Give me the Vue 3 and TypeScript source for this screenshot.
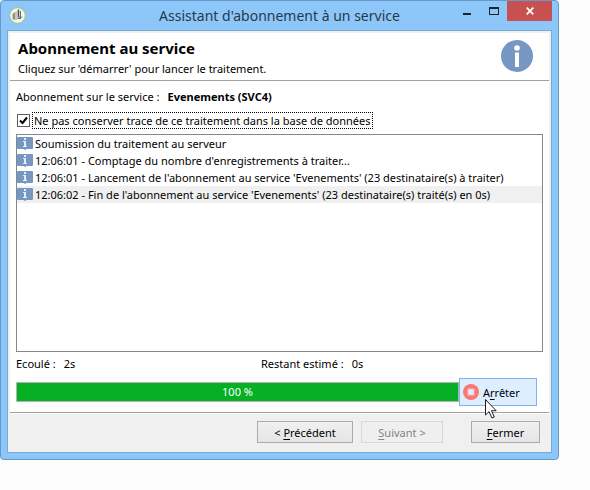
<script setup lang="ts">
import { ref } from 'vue'

interface LogEntry {
  id: number
  text: string
}

const skipTrace = ref(true)
const progress = ref(100)
const selectedId = ref(4)

const entries: LogEntry[] = [
  { id: 1, text: 'Soumission du traitement au serveur' },
  { id: 2, text: "12:06:01 - Comptage du nombre d'enregistrements à traiter..." },
  { id: 3, text: "12:06:01 - Lancement de l'abonnement au service 'Evenements' (23 destinataire(s) à traiter)" },
  { id: 4, text: "12:06:02 - Fin de l'abonnement au service 'Evenements' (23 destinataire(s) traité(s) en 0s)" },
]
</script>

<template>
  <div class="page">
    <main class="window">
      <header class="titlebar">
        <svg class="app-icon" viewBox="0 0 17 17" aria-hidden="true">
          <circle cx="8.500" cy="8.500" r="7.800" fill="#f6f8f2" stroke="#a3c76b" stroke-width="1" />
          <path d="M3.500 7 6 5v8l-2.500-1z" fill="#8f938c" />
          <path d="M6 5 8.500 3.500v9L6 13.500z" fill="#c4c8c1" />
          <path d="M9.500 2.500v8" stroke="#4b5048" stroke-width="1.500" fill="none" />
          <path d="M11.500 4v7.500H8.500M10 9.500l1.500 2 1.500-2" stroke="#6a6f66" stroke-width="1" fill="none" />
        </svg>
        <h1 class="window-title">Assistant d'abonnement à un service</h1>
        <div class="caption">
          <button type="button" class="cap" aria-label="Réduire"><span class="glyph-min"></span></button>
          <button type="button" class="cap" aria-label="Agrandir"><span class="glyph-max"></span></button>
          <button type="button" class="cap close" aria-label="Fermer la fenêtre">
            <svg viewBox="0 0 8 8" width="8" height="8" aria-hidden="true">
              <path d="M.7.700l6.600 6.600M7.300.700.700 7.300" stroke="#fff" stroke-width="1.800" />
            </svg>
          </button>
        </div>
      </header>

      <div class="client">
        <section class="intro">
          <div>
            <h2>Abonnement au service</h2>
            <p>Cliquez sur 'démarrer' pour lancer le traitement.</p>
          </div>
          <svg class="info" viewBox="0 0 32 32" aria-hidden="true">
            <circle cx="16" cy="16" r="16" fill="#7696c4" />
            <circle cx="16" cy="8" r="2.800" fill="#fff" />
            <rect x="14" y="12.500" width="4" height="14.500" fill="#fff" />
          </svg>
        </section>

        <section class="content">
          <div class="service">
            <span>Abonnement sur le service :</span>
            <strong>Evenements (SVC4)</strong>
          </div>

          <div class="option">
            <input id="skip-trace" v-model="skipTrace" type="checkbox" />
            <label for="skip-trace">Ne pas conserver trace de ce traitement dans la base de données</label>
          </div>

          <ul class="log">
            <li
              v-for="entry in entries"
              :key="entry.id"
              :class="{ selected: entry.id === selectedId }"
              @click="selectedId = entry.id"
            >
              <svg viewBox="0 0 16 13" width="16" height="13" aria-hidden="true">
                <path d="M1 0h14a1 1 0 0 1 1 1v10a1 1 0 0 1-1 1H9.500L8 13 6.500 12H1a1 1 0 0 1-1-1V1a1 1 0 0 1 1-1z" fill="#7696c4" />
                <path d="M7 1h2v2H7zM6 4h3v5h1v1H6V9h1V5H6z" fill="#e6edf7" />
              </svg>
              <span>{{ entry.text }}</span>
            </li>
          </ul>

          <div class="times">
            <div><span>Ecoulé :</span><span class="value">2s</span></div>
            <div><span>Restant estimé :</span><span class="value">0s</span></div>
          </div>

          <div class="run">
            <div class="bar" role="progressbar" :aria-valuenow="progress" aria-valuemin="0" aria-valuemax="100">
              <div class="fill" :style="{ width: progress + '%' }"></div>
              <span class="percent">{{ progress }} %</span>
            </div>
            <button type="button" class="stop">
              <svg viewBox="0 0 16 16" width="16" height="16" aria-hidden="true">
                <circle cx="8" cy="8" r="8" fill="#f97874" />
                <rect x="5" y="5" width="6" height="6" fill="#ddeeff" stroke="#fcb9b7" />
              </svg>
              <span>A<u>r</u>rêter</span>
              <svg class="pointer" viewBox="0 0 12 20" width="12" height="20" aria-hidden="true">
                <path d="M.5.500v15.500l3.600-3.400 2.800 6.400 2.400-1-2.800-6.300h4.700z" fill="#fff" stroke="#1c1c28" />
              </svg>
            </button>
          </div>
        </section>

        <footer class="actions">
          <button type="button" class="btn prev">&lt; <u>P</u>récédent</button>
          <button type="button" class="btn next" disabled><u>S</u>uivant &gt;</button>
          <button type="button" class="btn done"><u>F</u>ermer</button>
        </footer>
      </div>
    </main>
  </div>
</template>

<style>
body {
  background: #fcfcfc;
}
</style>

<style scoped>
.page {
  box-sizing: border-box;
  display: flex;
  min-height: 100vh;
  padding: 0 31px 30px 0;
  font-family: "Noto Sans", "Open Sans", sans-serif;
  font-size: 11px;
  line-height: 17px;
  color: #000;
}

.page * {
  box-sizing: border-box;
}

.window {
  flex: 1;
  min-width: 0;
  display: flex;
  flex-direction: column;
  padding: 0 6px 6px;
  background: #8dc7fa;
  border: 1px solid #6699c8;
  border-radius: 4px;
}

.titlebar {
  display: grid;
  grid-template-columns: 1fr auto 1fr;
  align-items: start;
  height: 29px;
}

.app-icon {
  width: 17px;
  height: 17px;
  margin: 6px 0 0 2px;
}

.window-title {
  margin: 0;
  padding-top: 5px;
  font-size: 14px;
  font-weight: 400;
  line-height: 20px;
  color: #2a3947;
  white-space: nowrap;
}

.caption {
  display: flex;
  justify-content: flex-end;
}

.cap {
  display: flex;
  align-items: flex-start;
  justify-content: center;
  width: 27px;
  height: 20px;
  padding: 0;
  border: 0;
  background: none;
}

.glyph-min {
  width: 8px;
  height: 2px;
  margin-top: 12px;
  background: #1c242c;
}

.glyph-max {
  width: 10px;
  height: 8px;
  margin-top: 6px;
  border: 1px solid #1c242c;
  border-top-width: 2px;
}

.cap.close {
  align-items: center;
  width: 45px;
  background: #c75050;
}

.client {
  flex: 1;
  display: flex;
  flex-direction: column;
  padding: 2px;
  background: #f0f0f0;
  border: 1px solid #78aad8;
}

.intro {
  display: flex;
  justify-content: space-between;
  height: 48px;
  padding: 7px 16px 0 8px;
  background: #fff;
  border-bottom: 1px solid #a0a0a0;
}

.intro h2 {
  margin: 0;
  font-size: 15px;
  font-weight: 700;
  line-height: 16px;
}

.intro p {
  margin: 4px 0 0;
}

.info {
  width: 32px;
  height: 32px;
}

.content {
  flex: 1;
  display: flex;
  flex-direction: column;
  padding: 7px 6px 6px;
  background: #fff;
  border-bottom: 1px solid #a0a0a0;
}

.service {
  display: flex;
  gap: 8px;
}

.option {
  display: flex;
  align-items: center;
  gap: 2px;
  margin: 7px 0 5px;
}

.option input {
  appearance: none;
  width: 13px;
  height: 13px;
  margin: 0 0 0 1px;
  background: #fff;
  border: 1px solid #606060;
}

.option input:checked {
  background: #fff url("data:image/svg+xml,%3Csvg xmlns='http://www.w3.org/2000/svg' viewBox='0 0 11 11'%3E%3Cpath d='M2 5.500 4.500 8 9 2.500' fill='none' stroke='%23000' stroke-width='2'/%3E%3C/svg%3E") center / 11px 11px no-repeat;
}

.option label {
  padding: 0 1px;
  line-height: 15px;
  border: 1px dotted #000;
  white-space: nowrap;
}

.log {
  flex: 1;
  min-height: 120px;
  margin: 0;
  padding: 0;
  list-style: none;
  border: 1px solid #828790;
}

.log li {
  display: flex;
  align-items: center;
  gap: 2px;
  white-space: nowrap;
}

.log li svg {
  flex: none;
}

.log li.selected {
  background: #f0f0f0;
}

.times {
  display: grid;
  grid-template-columns: 245px 1fr;
  margin: 3px 0 6px;
}

.value {
  margin-left: 8px;
}

.run {
  display: flex;
  align-items: center;
  padding-right: 6px;
}

.bar {
  flex: 1;
  display: grid;
  height: 20px;
  border: 1px solid #b4b4b4;
  background: #e6e6e6;
}

.fill,
.percent {
  grid-area: 1 / 1;
}

.fill {
  background: #06b025;
}

.percent {
  line-height: 18px;
  color: #fff;
  text-align: center;
}

.stop {
  position: relative;
  display: flex;
  align-items: center;
  gap: 4px;
  width: 78px;
  height: 28px;
  padding: 0 0 0 3px;
  font: inherit;
  color: #000;
  background: #ddeeff;
  border: 1px solid #7eb4ea;
}

.pointer {
  position: absolute;
  left: 25px;
  top: 20px;
}

.actions {
  display: flex;
  justify-content: flex-end;
  gap: 8px;
  padding: 7px 9px 7px;
  border-top: 1px solid #fff;
}

.btn {
  height: 22px;
  padding: 0;
  font: inherit;
  color: #000;
  background: linear-gradient(#f0f0f0, #e5e5e5);
  border: 1px solid #acacac;
}

.btn:disabled {
  color: #838383;
  background: #efefef;
  border-color: #d9d9d9;
}

.prev {
  width: 96px;
}

.next {
  width: 82px;
}

.done {
  width: 69px;
  margin-left: 20px;
}

u {
  text-underline-offset: 2px;
  text-decoration-skip-ink: none;
}
</style>
